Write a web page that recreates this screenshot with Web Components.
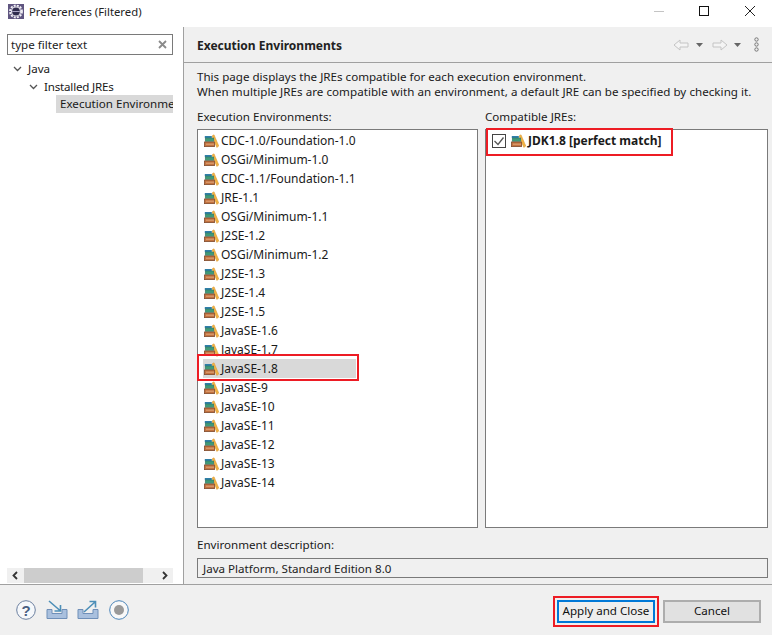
<!DOCTYPE html>
<html>
<head>
<meta charset="utf-8">
<title>Preferences (Filtered)</title>
<style>
  html, body { margin: 0; padding: 0; }
  body { width: 772px; height: 635px; overflow: hidden; background: #f0f0f0; font: 11.6px/16px "Noto Sans", "Liberation Sans", sans-serif; color: #1a1a1a; }
</style>
</head>
<body>
<pref-dialog>
  <pref-titlebar title-text="Preferences (Filtered)"></pref-titlebar>
  <pref-main>
    <pref-sidebar></pref-sidebar>
    <pref-page></pref-page>
  </pref-main>
  <pref-footer></pref-footer>
</pref-dialog>

<script>
const JRE_ICON = `
  <svg width="15" height="14" viewBox="0 0 15 14" style="display:block;flex:none">
    <path d="M8 2 L10 .8 L14.8 12 L12.8 13.4 Z" fill="#f2b445" stroke="#d8952a" stroke-width=".5"/>
    <rect x=".8" y="2" width="7" height="2" fill="#2f7fa8"/>
    <rect x="1.2" y="4" width="8.6" height="3.4" fill="#3f9a78" stroke="#2f6f60" stroke-width=".5"/>
    <rect x=".5" y="8" width="10" height="4.6" fill="#c4733f" stroke="#7f4a2c" stroke-width=".8"/>
    <path d="M2 10.2h8" stroke="#e6b48c" stroke-width=".8"/>
  </svg>`;

class PrefDialog extends HTMLElement {
  connectedCallback() {
    this.attachShadow({ mode: 'open' });
    this.shadowRoot.innerHTML = `
      <style>
        :host { display: flex; flex-direction: column; width: 772px; height: 635px; }
      </style>
      <slot></slot>
    `;
  }
}

class PrefMain extends HTMLElement {
  connectedCallback() {
    this.attachShadow({ mode: 'open' });
    this.shadowRoot.innerHTML = `
      <style>
        :host { display: flex; height: 557px; border-bottom: 1px solid #a0a0a0; flex: none; }
      </style>
      <slot></slot>
    `;
  }
}

class PrefTitlebar extends HTMLElement {
  connectedCallback() {
    this.attachShadow({ mode: 'open' });
    this.shadowRoot.innerHTML = `
      <style>
        :host { display: flex; align-items: center; height: 27px; box-sizing: border-box; padding-bottom: 4px; background: #fff; flex: none; }
        .logo { margin-left: 8px; width: 16px; height: 15px; display: block; }
        .title { margin-left: 5px; color: #222; font-size: 11.3px; }
        .win { margin-left: auto; display: flex; align-self: flex-start; }
        .win svg { display: block; width: 46px; height: 27px; }
      </style>
      <svg class="logo" viewBox="0 0 16 15">
        <rect width="16" height="15" fill="#5f5580"/>
        <circle cx="8" cy="7.5" r="6" fill="none" stroke="#f4f4f8" stroke-width="1.8" stroke-dasharray="2 1.15"/>
        <circle cx="8" cy="7.5" r="5" fill="#eceaf2"/>
        <circle cx="8" cy="7.5" r="3.9" fill="#2f2c4e"/>
        <path d="M4.2 7.5h7.6" stroke="#a8a4c4" stroke-width="1"/>
      </svg>
      <span class="title">${this.getAttribute('title-text')}</span>
      <div class="win">
        <svg viewBox="0 0 46 27"><path d="M18 11.5h10" stroke="#c4c4c4"/></svg>
        <svg viewBox="0 0 46 27"><rect x="17.5" y="6.5" width="9" height="9" fill="none" stroke="#111"/></svg>
        <svg viewBox="0 0 44 27" style="width:44px"><path d="M17 6l10 10M27 6L17 16" stroke="#222" fill="none"/></svg>
      </div>
    `;
  }
}

class PrefSidebar extends HTMLElement {
  connectedCallback() {
    this.attachShadow({ mode: 'open' });
    this.shadowRoot.innerHTML = `
      <style>
        :host { display: flex; flex-direction: column; flex: none; background: #fff; border-right: 1px solid #a0a0a0; padding: 7px 10px 1px 7px; width: 166px; }
        .filter { display: flex; align-items: center; height: 19px; border: 1px solid #7a7a7a; padding-left: 3px; color: #222; }
        .filter span { flex: 1; padding-top: 1px; }
        .filter svg { margin-right: 5px; }
        .tree { flex: 1; padding-top: 5px; }
        .row { display: flex; align-items: center; height: 18px; }
        .row svg { flex: none; margin-right: 6px; }
        .l1 { padding-left: 6px; }
        .l2 { padding-left: 22px; letter-spacing: -.2px; }
        .sel { margin-left: 49px; background: #d9d9d9; padding-left: 4px; overflow: hidden; white-space: nowrap; height: 18px; margin-top: -1px; }
        .hbar { display: flex; align-items: center; height: 15px; background: #f0f0f0; padding: 0 5px; }
        .thumb { width: 119px; height: 15px; background: #cdcdcd; margin-left: 6px; margin-right: auto; }
        .hbar svg { flex: none; }
      </style>
      <div class="filter">
        <span>type filter text</span>
        <svg width="9" height="9" viewBox="0 0 9 9"><path d="M1 1l7 7M8 1L1 8" stroke="#8a8a8a" stroke-width="1.8"/></svg>
      </div>
      <div class="tree">
        <div class="row l1"><svg width="9" height="6" viewBox="0 0 9 6"><path d="M1 1l3.5 3.5L8 1" fill="none" stroke="#555" stroke-width="1.3"/></svg>Java</div>
        <div class="row l2"><svg width="9" height="6" viewBox="0 0 9 6"><path d="M1 1l3.5 3.5L8 1" fill="none" stroke="#555" stroke-width="1.3"/></svg>Installed JREs</div>
        <div class="row sel">Execution Environments</div>
      </div>
      <div class="hbar">
        <svg width="6" height="9" viewBox="0 0 6 9"><path d="M5 1L1.5 4.5 5 8" fill="none" stroke="#333" stroke-width="1.8"/></svg>
        <div class="thumb"></div>
        <svg width="6" height="9" viewBox="0 0 6 9"><path d="M1 1l3.5 3.5L1 8" fill="none" stroke="#333" stroke-width="1.8"/></svg>
      </div>
    `;
  }
}

class EnvItem extends HTMLElement {
  connectedCallback() {
    this.attachShadow({ mode: 'open' });
    this.shadowRoot.innerHTML = `
      <style>
        :host { display: flex; align-items: center; gap: 2px; height: 19px; padding-left: 6px; white-space: nowrap; position: relative; font-size: 12px; }
        :host([selected]) { background: #d9d9d9; margin: 0 121px 0 5px; padding-left: 1px; }
        :host([selected])::after { content: ""; position: absolute; left: -6px; right: -3px; top: -5px; bottom: -3px; border: 2px solid #ed1c24; }
      </style>
      ${JRE_ICON}<slot></slot>
    `;
  }
}

class PrefPage extends HTMLElement {
  connectedCallback() {
    const envs = ['CDC-1.0/Foundation-1.0','OSGi/Minimum-1.0','CDC-1.1/Foundation-1.1','JRE-1.1','OSGi/Minimum-1.1','J2SE-1.2','OSGi/Minimum-1.2','J2SE-1.3','J2SE-1.4','J2SE-1.5','JavaSE-1.6','JavaSE-1.7','JavaSE-1.8','JavaSE-9','JavaSE-10','JavaSE-11','JavaSE-12','JavaSE-13','JavaSE-14'];
    this.attachShadow({ mode: 'open' });
    this.shadowRoot.innerHTML = `
      <style>
        :host { display: flex; flex-direction: column; flex: 1; min-width: 0; }
        header { display: flex; align-items: center; height: 35px; border-bottom: 1px solid #a0a0a0; padding: 0 13px; flex: none; }
        h1 { font: inherit; font-size: 12px; font-weight: 700; margin: 2px 0 0; color: #222; flex: 1; }
        .tools { display: flex; align-items: center; }
        .body { flex: 1; display: flex; flex-direction: column; padding: 6px 4px 6px 13px; min-height: 0; }
        p { margin: 0; line-height: 15px; }
        .cols { display: grid; grid-template-columns: 281px 283px; column-gap: 7px; flex: 1; min-height: 0; margin-top: 10px; }
        .col { display: flex; flex-direction: column; min-height: 0; }
        .lbl { height: 20px; line-height: 16px; }
        .list { flex: 1; background: #fff; border: 1px solid #7a7a7a; padding-top: 1px; }
        .lbl.desc { margin-top: 9px; height: 21px; line-height: 16px; }
        .descbox { height: 18px; border: 1px solid #7a7a7a; line-height: 19px; padding-left: 5px; color: #222; }
        .jre { display: flex; align-items: center; height: 19px; font-weight: 700; font-size: 12px; width: max-content; gap: 5px; margin-left: 6px; position: relative; }
        .jre::after { content: ""; position: absolute; left: -6px; right: -12px; top: -3px; bottom: -6px; border: 2px solid #ed1c24; }
        .jre span { margin-left: -3px; }
        .box { width: 14px; height: 14px; }
      </style>
      <header>
        <h1>Execution Environments</h1>
        <div class="tools">
          <svg width="16" height="12" viewBox="0 0 16 12"><path d="M1 6l6-5v3h8v4H7v3z" fill="#f4f4f4" stroke="#c4c4c4"/></svg>
          <svg width="7" height="4" viewBox="0 0 7 4" style="margin:0 9px 0 7px"><path d="M0 0h7L3.5 4z" fill="#666"/></svg>
          <svg width="16" height="12" viewBox="0 0 16 12"><path d="M15 6L9 1v3H1v4h8v3z" fill="#f4f4f4" stroke="#c4c4c4"/></svg>
          <svg width="7" height="4" viewBox="0 0 7 4" style="margin:0 13px 0 6px"><path d="M0 0h7L3.5 4z" fill="#666"/></svg>
          <svg width="5" height="15" viewBox="0 0 5 15"><circle cx="2.5" cy="2.5" r="1.7" fill="#eee" stroke="#777"/><circle cx="2.5" cy="7.5" r="1.7" fill="#eee" stroke="#777"/><circle cx="2.5" cy="12.5" r="1.7" fill="#eee" stroke="#777"/></svg>
        </div>
      </header>
      <div class="body">
        <p>This page displays the JREs compatible for each execution environment.<br><span style="letter-spacing:.04px">When multiple JREs are compatible with an environment, a default JRE can be specified by checking it.</span></p>
        <div class="cols">
          <div class="col">
            <div class="lbl">Execution Environments:</div>
            <div class="list">
              ${envs.map(e => `<env-item${e === 'JavaSE-1.8' ? ' selected' : ''}>${e}</env-item>`).join('')}
            </div>
          </div>
          <div class="col">
            <div class="lbl">Compatible JREs:</div>
            <div class="list">
              <div class="jre">
                <svg class="box" viewBox="0 0 14 14"><rect x=".5" y=".5" width="13" height="13" fill="#fff" stroke="#444"/><path d="M2.5 7l3.5 3.5 5.5-7" fill="none" stroke="#555" stroke-width="1.3"/></svg>
                ${JRE_ICON}
                <span>JDK1.8 [perfect match]</span>
              </div>
            </div>
          </div>
        </div>
        <div class="lbl desc">Environment description:</div>
        <div class="descbox">Java Platform, Standard Edition 8.0</div>
      </div>
    `;
  }
}

class PrefFooter extends HTMLElement {
  connectedCallback() {
    this.attachShadow({ mode: 'open' });
    this.shadowRoot.innerHTML = `
      <style>
        :host { display: flex; align-items: center; flex: 1; padding: 3px 11px 0 16px; }
        .icons { display: flex; align-items: center; flex: 1; margin-top: -3px; }
        svg { display: block; }
        button { font: inherit; color: #111; height: 23px; width: 98px; padding: 0 0 1px; background: #e1e1e1; border: 2px solid #adadad; box-sizing: border-box; }
        .apply { border-color: #0078d7; background: #eee; position: relative; margin-right: 8px; }
        .apply::after { content: ""; position: absolute; inset: -6px; border: 2px solid #ed1c24; }
      </style>
      <div class="icons">
        <svg width="20" height="20" viewBox="0 0 20 20"><circle cx="10" cy="10" r="9.3" fill="#f6f8fb" stroke="#6b7f9f"/><text x="10" y="15.5" font-size="15" font-weight="700" text-anchor="middle" fill="#4a5f82" font-family="Liberation Sans">?</text></svg>
        <svg width="22" height="20" viewBox="0 0 22 20" style="margin-left:10px"><path d="M1 9.5h5v4h10v-4h5v9H1z" fill="#a9c0de" stroke="#6f8fb8"/><path d="M3 1l11 9.5M14.5 5v6H8.5" fill="none" stroke="#4d8fb8" stroke-width="1.6"/></svg>
        <svg width="22" height="20" viewBox="0 0 22 20" style="margin-left:9px"><path d="M1 9.5h5v4h10v-4h5v9H1z" fill="#a9c0de" stroke="#6f8fb8"/><path d="M7 12L18 2M12.5 1.5h6v6" fill="none" stroke="#4d8fb8" stroke-width="1.6"/></svg>
        <svg width="20" height="20" viewBox="0 0 20 20" style="margin-left:10px"><circle cx="10" cy="10" r="9.3" fill="#f8f8f8" stroke="#4a84b8"/><circle cx="10" cy="10" r="5" fill="#999"/></svg>
      </div>
      <button class="apply">Apply and Close</button>
      <button>Cancel</button>
    `;
  }
}

customElements.define('pref-dialog', PrefDialog);
customElements.define('pref-main', PrefMain);
customElements.define('pref-titlebar', PrefTitlebar);
customElements.define('pref-sidebar', PrefSidebar);
customElements.define('env-item', EnvItem);
customElements.define('pref-page', PrefPage);
customElements.define('pref-footer', PrefFooter);
</script>
</body>
</html>
